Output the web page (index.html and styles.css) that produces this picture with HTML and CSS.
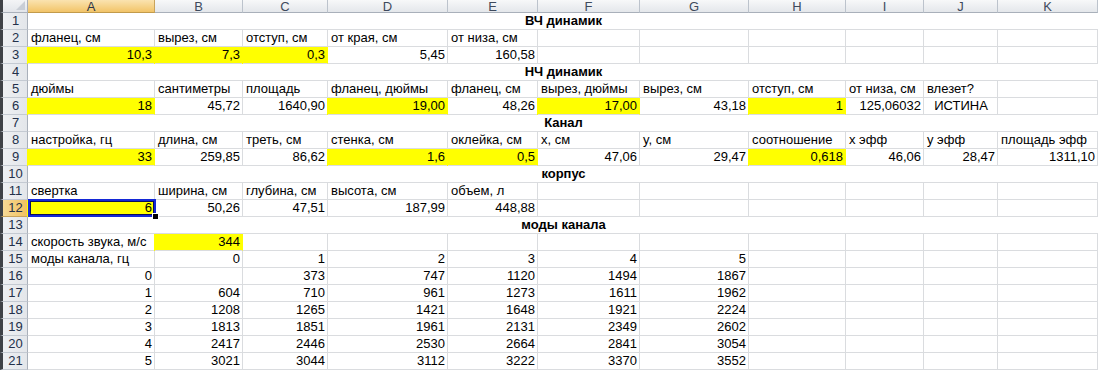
FILE: index.html
```html
<!DOCTYPE html>
<html lang="ru">
<head>
<meta charset="utf-8">
<title>Лист1</title>
<link rel="stylesheet" href="styles.css">
</head>
<body>
<div class="sheet">
  <div class="corner"><span class="tri"></span></div>
  <div class="ch sel-h">A</div><div class="ch">B</div><div class="ch">C</div><div class="ch">D</div><div class="ch">E</div><div class="ch">F</div><div class="ch">G</div><div class="ch">H</div><div class="ch">I</div><div class="ch">J</div><div class="ch">K</div>

  <div class="rh">1</div><div class="c title">ВЧ динамик</div>

  <div class="rh">2</div><div class="c">фланец, см</div><div class="c">вырез, см</div><div class="c">отступ, см</div><div class="c">от края, см</div><div class="c">от низа, см</div><div class="c"></div><div class="c"></div><div class="c"></div><div class="c"></div><div class="c"></div><div class="c"></div>

  <div class="rh">3</div><div class="c n y">10,3</div><div class="c n y">7,3</div><div class="c n y">0,3</div><div class="c n">5,45</div><div class="c n">160,58</div><div class="c"></div><div class="c"></div><div class="c"></div><div class="c"></div><div class="c"></div><div class="c"></div>

  <div class="rh">4</div><div class="c title">НЧ динамик</div>

  <div class="rh">5</div><div class="c">дюймы</div><div class="c">сантиметры</div><div class="c">площадь</div><div class="c">фланец, дюймы</div><div class="c">фланец, см</div><div class="c">вырез, дюймы</div><div class="c">вырез, см</div><div class="c">отступ, см</div><div class="c">от низа, см</div><div class="c">влезет?</div><div class="c"></div>

  <div class="rh">6</div><div class="c n y">18</div><div class="c n">45,72</div><div class="c n">1640,90</div><div class="c n y">19,00</div><div class="c n">48,26</div><div class="c n y">17,00</div><div class="c n">43,18</div><div class="c n y">1</div><div class="c n">125,06032</div><div class="c ctr">ИСТИНА</div><div class="c"></div>

  <div class="rh">7</div><div class="c title">Канал</div>

  <div class="rh">8</div><div class="c">настройка, гц</div><div class="c">длина, см</div><div class="c">треть, см</div><div class="c">стенка, см</div><div class="c">оклейка, см</div><div class="c">x, см</div><div class="c">y, см</div><div class="c">соотношение</div><div class="c">x эфф</div><div class="c">y эфф</div><div class="c">площадь эфф</div>

  <div class="rh">9</div><div class="c n y">33</div><div class="c n">259,85</div><div class="c n">86,62</div><div class="c n y">1,6</div><div class="c n y">0,5</div><div class="c n">47,06</div><div class="c n">29,47</div><div class="c n y">0,618</div><div class="c n">46,06</div><div class="c n">28,47</div><div class="c n">1311,10</div>

  <div class="rh">10</div><div class="c title">корпус</div>

  <div class="rh">11</div><div class="c">свертка</div><div class="c">ширина, см</div><div class="c">глубина, см</div><div class="c">высота, см</div><div class="c">объем, л</div><div class="c"></div><div class="c"></div><div class="c"></div><div class="c"></div><div class="c"></div><div class="c"></div>

  <div class="rh sel-h">12</div><div class="c n y active">6</div><div class="c n">50,26</div><div class="c n">47,51</div><div class="c n">187,99</div><div class="c n">448,88</div><div class="c"></div><div class="c"></div><div class="c"></div><div class="c"></div><div class="c"></div><div class="c"></div>

  <div class="rh">13</div><div class="c title">моды канала</div>

  <div class="rh">14</div><div class="c">скорость звука, м/с</div><div class="c n y">344</div><div class="c"></div><div class="c"></div><div class="c"></div><div class="c"></div><div class="c"></div><div class="c"></div><div class="c"></div><div class="c"></div><div class="c"></div>

  <div class="rh">15</div><div class="c">моды канала, гц</div><div class="c n">0</div><div class="c n">1</div><div class="c n">2</div><div class="c n">3</div><div class="c n">4</div><div class="c n">5</div><div class="c"></div><div class="c"></div><div class="c"></div><div class="c"></div>

  <div class="rh">16</div><div class="c n">0</div><div class="c n"></div><div class="c n">373</div><div class="c n">747</div><div class="c n">1120</div><div class="c n">1494</div><div class="c n">1867</div><div class="c"></div><div class="c"></div><div class="c"></div><div class="c"></div>

  <div class="rh">17</div><div class="c n">1</div><div class="c n">604</div><div class="c n">710</div><div class="c n">961</div><div class="c n">1273</div><div class="c n">1611</div><div class="c n">1962</div><div class="c"></div><div class="c"></div><div class="c"></div><div class="c"></div>

  <div class="rh">18</div><div class="c n">2</div><div class="c n">1208</div><div class="c n">1265</div><div class="c n">1421</div><div class="c n">1648</div><div class="c n">1921</div><div class="c n">2224</div><div class="c"></div><div class="c"></div><div class="c"></div><div class="c"></div>

  <div class="rh">19</div><div class="c n">3</div><div class="c n">1813</div><div class="c n">1851</div><div class="c n">1961</div><div class="c n">2131</div><div class="c n">2349</div><div class="c n">2602</div><div class="c"></div><div class="c"></div><div class="c"></div><div class="c"></div>

  <div class="rh">20</div><div class="c n">4</div><div class="c n">2417</div><div class="c n">2446</div><div class="c n">2530</div><div class="c n">2664</div><div class="c n">2841</div><div class="c n">3054</div><div class="c"></div><div class="c"></div><div class="c"></div><div class="c"></div>

  <div class="rh">21</div><div class="c n">5</div><div class="c n">3021</div><div class="c n">3044</div><div class="c n">3112</div><div class="c n">3222</div><div class="c n">3370</div><div class="c n">3552</div><div class="c"></div><div class="c"></div><div class="c"></div><div class="c"></div>
</div>
</body>
</html>
```

FILE: styles.css
```css
html, body {
  margin: 0;
  padding: 0;
  background: #ffffff;
  overflow: hidden;
}

.sheet {
  display: grid;
  grid-template-columns: 28px 127px 88px 85px 120px 90px 102px 109px 97px 78px 74px 100px;
  grid-template-rows: 13px;
  grid-auto-rows: 17px;
  width: 1098px;
  font-family: "Liberation Sans", Arial, sans-serif;
  font-size: 13px;
  color: #000000;
}

.corner {
  position: relative;
  box-sizing: border-box;
  background: linear-gradient(#f3f4f6, #e2e5ea);
  border-left: 3px solid #3f4247;
  border-right: 1px solid #a9b0ba;
  border-bottom: 1px solid #a9b0ba;
}

.tri {
  position: absolute;
  right: 2px;
  bottom: 2px;
  width: 0;
  height: 0;
  border-left: 9px solid transparent;
  border-bottom: 9px solid #c9ced6;
}

.ch {
  box-sizing: border-box;
  background: linear-gradient(#f7f8f9, #e4e7eb);
  border-right: 1px solid #bcc3cc;
  border-bottom: 1px solid #a9b0ba;
  color: #3e4a5c;
  text-align: center;
  line-height: 13px;
  font-size: 13px;
}

.rh {
  box-sizing: border-box;
  background: linear-gradient(90deg, #eef0f3, #e3e6ea);
  border-left: 3px solid #3f4247;
  border-right: 1px solid #a9b0ba;
  border-bottom: 1px solid #c4cad2;
  color: #23304a;
  text-align: center;
  line-height: 16px;
  padding-left: 1px;
}

.ch.sel-h {
  background: linear-gradient(#fae3b0, #f2c468);
  border-bottom-color: #c29b4b;
  border-right-color: #c9a35b;
  color: #2b3447;
}

.rh.sel-h {
  background: linear-gradient(90deg, #f7d996, #f1c15f);
  border-bottom-color: #c9a35b;
  border-right-color: #c29b4b;
}

.c {
  box-sizing: border-box;
  border-right: 1px solid #dadcdf;
  border-bottom: 1px solid #dadcdf;
  line-height: 16px;
  padding: 0 2px 0 3px;
  white-space: nowrap;
}

.c.n {
  text-align: right;
}

.c.ctr {
  text-align: center;
}

.c.title {
  grid-column: 2 / -1;
  border-right: none;
  text-align: center;
  font-weight: bold;
}

.c.y {
  background: #ffff00;
  border-right-color: #ffff00;
  box-shadow: -1px 0 0 #ffff00;
}

.c.active {
  position: relative;
}

.c.active::before {
  content: "";
  position: absolute;
  left: 0;
  top: -1px;
  right: -2px;
  bottom: -1px;
  border: 2px solid #1428d6;
  box-shadow: inset 0 0 0 1px #0a0f5a;
}

.c.active::after {
  content: "";
  position: absolute;
  right: -5px;
  bottom: -4px;
  width: 5px;
  height: 5px;
  background: #000000;
  border: 1px solid #ffffff;
}
```
